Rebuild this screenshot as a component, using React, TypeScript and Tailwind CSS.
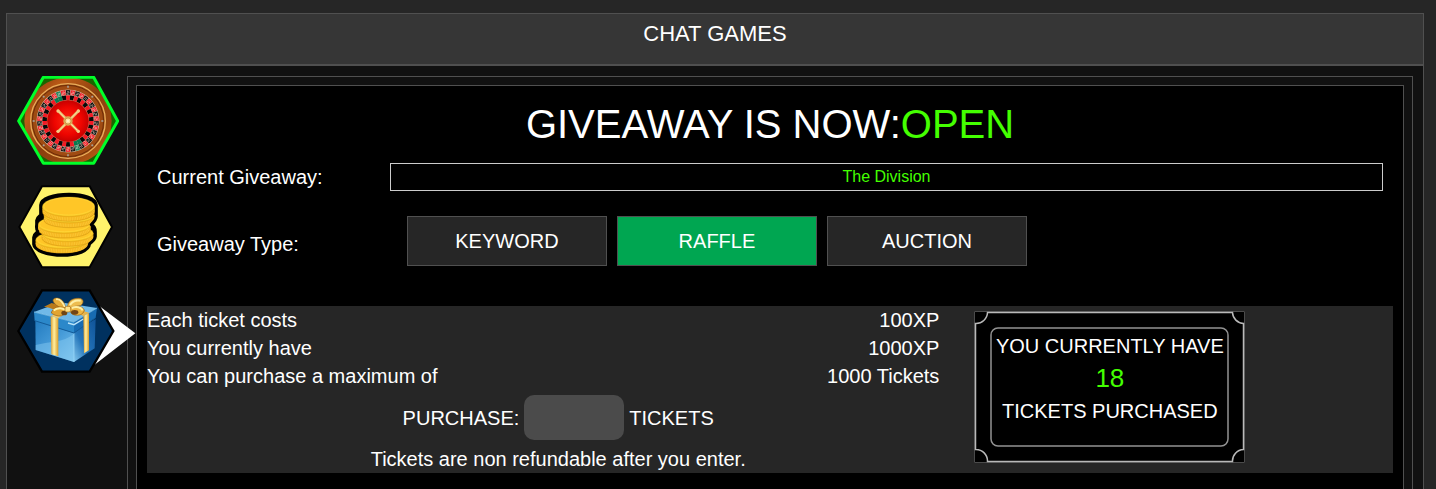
import { useState } from 'react'
import type { ReactNode } from 'react'

type GiveawayType = 'keyword' | 'raffle' | 'auction'

const TYPES: { id: GiveawayType; label: string }[] = [
  { id: 'keyword', label: 'KEYWORD' },
  { id: 'raffle',  label: 'RAFFLE' },
  { id: 'auction', label: 'AUCTION' },
]

const COSTS = [
  { label: 'Each ticket costs',             value: '100XP' },
  { label: 'You currently have',            value: '1000XP' },
  { label: 'You can purchase a maximum of', value: '1000 Tickets' },
]

// ─── Icons ────────────────────────────────────────────────────────────────────

const POCKETS = 38

function wedge(i: number, inner: number, outer: number) {
  const step = (Math.PI * 2) / POCKETS
  const a = (i - 0.5) * step - Math.PI / 2
  const b = a + step
  const p = (r: number, t: number) => `${204 + r * Math.cos(t)} ${168 + r * Math.sin(t)}`
  return `M${p(inner, a)}L${p(outer, a)}A${outer} ${outer} 0 0 1 ${p(outer, b)}L${p(inner, b)}A${inner} ${inner} 0 0 0 ${p(inner, a)}Z`
}

const isGreen = (i: number) => i === 17 || i === 36

function pocketColor(i: number) {
  if (isGreen(i)) return '#087a50'
  return i % 2 ? '#f21a24' : '#080808'
}

function RouletteIcon() {
  return (
    <svg width="102" height="90" viewBox="51 33 306 270" aria-hidden="true">
      <defs>
        <clipPath id="wheel-hex">
          <path d="M57 168 131 38H281L351 168 281 295H131Z" />
        </clipPath>
        <linearGradient id="wood" x1="0" y1="0" x2="1" y2="1">
          <stop offset="0" stopColor="#7a350a" />
          <stop offset=".25" stopColor="#bd5b16" />
          <stop offset=".5" stopColor="#8a3f0e" />
          <stop offset=".75" stopColor="#9a480f" />
          <stop offset="1" stopColor="#d36c1c" />
        </linearGradient>
        <radialGradient id="felt">
          <stop offset="0" stopColor="#ff2a12" />
          <stop offset=".65" stopColor="#ee0500" />
          <stop offset="1" stopColor="#c40000" />
        </radialGradient>
      </defs>
      <path d="M57 168 131 38H281L351 168 281 295H131Z" fill="#196500" />
      <g clipPath="url(#wheel-hex)">
        <circle cx="204" cy="168" r="131" fill="url(#wood)" />
        <circle cx="204" cy="168" r="112" fill="#a04b12" stroke="#e8ae5c" strokeWidth="4" />
        <circle cx="204" cy="168" r="107" fill="none" stroke="#6b2d08" strokeWidth="3" />
        <circle cx="204" cy="168" r="94" fill="#e2d0b4" />
      </g>
      {Array.from({ length: 8 }, (_, i) => (
        <path key={i} d="M204 62v6" stroke="#a7a097" strokeWidth="5" transform={`rotate(${i * 45} 204 168)`} />
      ))}
      {Array.from({ length: POCKETS }, (_, i) => (
        <g key={i}>
          <path d={wedge(i, 77, 93)} fill={pocketColor(i)} stroke="#d9c4ad" strokeWidth="1" />
          <path d={wedge(i, 63, 77)} fill={pocketColor(isGreen(i) ? i : i + 1)} />
          <path
            d="M201 80h6v4h-6v5h6"
            fill="none"
            stroke="#eee2d5"
            strokeOpacity=".75"
            strokeWidth="2"
            transform={`rotate(${(i * 360) / POCKETS} 204 168)`}
          />
        </g>
      ))}
      <circle cx="204" cy="168" r="63" fill="url(#felt)" stroke="#d0603a" strokeWidth="1" />
      <path d="M175 138 235 199M235 138 175 199" stroke="#e5b66a" strokeWidth="8" strokeLinecap="round" />
      <path d="M177 140 233 197M233 140 177 197" stroke="#ffe4a5" strokeWidth="3" />
      <g fill="#f3ca83">
        <circle cx="174" cy="138" r="5" />
        <circle cx="235" cy="138" r="5" />
        <circle cx="174" cy="199" r="5" />
        <circle cx="235" cy="199" r="5" />
      </g>
      <circle cx="204" cy="168" r="14" fill="#dba954" />
      <circle cx="204" cy="168" r="9" fill="#ffdf9c" stroke="#b68435" strokeWidth="2" />
      <circle cx="204" cy="168" r="3" fill="#fff5cf" />
      <path d="M56 168 130 37H281L353 168 281 295H130Z" fill="none" stroke="#00ff2a" strokeWidth="9" strokeLinejoin="round" />
    </svg>
  )
}

// bottom coin first, each one overlaps the one below it
const COINS = [
  { x: 187, y: 195, rx: 80, ry: 25 },
  { x: 203, y: 175, rx: 77, ry: 24 },
  { x: 193, y: 149, rx: 79, ry: 25 },
  { x: 208, y: 121, rx: 76, ry: 22 },
  { x: 206, y: 95,  rx: 79, ry: 29 },
]

const STACK =
  'M122 90C123 70 160 58 207 58C253 58 287 70 289 90V124C289 134 281 142 274 149C285 154 286 161 286 170V185C285 194 276 201 269 206C267 228 231 241 187 241C139 241 103 226 101 208V187C102 179 107 174 113 169C108 165 109 158 110 148V136C111 127 119 123 122 120Z'

function CoinsIcon() {
  return (
    <svg width="98" height="86" viewBox="51 27 294 258" aria-hidden="true">
      <defs>
        <clipPath id="coin-stack">
          <path d={STACK} />
        </clipPath>
      </defs>
      <path d="M58 156 126 34H269L336 156 269 277H126Z" fill="#fff36b" stroke="#000" strokeWidth="6" />
      <path d={STACK} fill="#000" />
      <g clipPath="url(#coin-stack)">
        {COINS.map(c => (
          <g key={c.y}>
            <path
              d={`M${c.x - c.rx} ${c.y}v15a${c.rx} ${c.ry} 0 0 0 ${c.rx * 2} 0v-15Z`}
              fill="#f5b41c"
              stroke="#b98a12"
              strokeWidth="1"
            />
            <path
              d={`M${c.x - c.rx + 4} ${c.y + 8}a${c.rx - 4} ${c.ry} 0 0 0 ${(c.rx - 4) * 2} 0`}
              fill="none"
              stroke="#ffd548"
              strokeWidth="10"
              strokeDasharray="3 2"
              opacity=".5"
            />
            <ellipse cx={c.x} cy={c.y} rx={c.rx} ry={c.ry} fill="#ffcd28" stroke="#c9a01c" strokeWidth="1" />
            <ellipse cx={c.x} cy={c.y - 1} rx={c.rx - 5} ry={c.ry - 3} fill="#ffc627" stroke="#ffd83c" strokeWidth="2" />
          </g>
        ))}
      </g>
      <path d={STACK} fill="none" stroke="#000" strokeWidth="9" strokeLinejoin="round" />
    </svg>
  )
}

function GiftIcon() {
  return (
    <svg width="98" height="86" viewBox="51 24 294 258" className="overflow-visible" aria-hidden="true">
      <defs>
        <linearGradient id="box-left" x1="0" y1="0" x2="1" y2="1">
          <stop offset="0" stopColor="#227bc0" />
          <stop offset=".5" stopColor="#469bd8" />
          <stop offset="1" stopColor="#7bc3ed" />
        </linearGradient>
        <linearGradient id="box-right" x1="0" y1="1" x2="1" y2="0">
          <stop offset="0" stopColor="#82c6ed" />
          <stop offset=".4" stopColor="#2475ba" />
          <stop offset="1" stopColor="#105398" />
        </linearGradient>
        <linearGradient id="ribbon" x1="0" x2="1">
          <stop offset="0" stopColor="#dc9d2d" />
          <stop offset=".45" stopColor="#fff0a2" />
          <stop offset="1" stopColor="#d99c26" />
        </linearGradient>
      </defs>
      <path d="M298 78 406 160 282 256 335 154Z" fill="#fff" />
      <path d="M55 153 126 31H269L340 153 269 275H126Z" fill="#00315f" stroke="#000" strokeWidth="7" />

      {/* box */}
      <path d="M106 121 222 155V246L107 210Z" fill="url(#box-left)" />
      <path d="M222 155 287 117 284 205 222 246Z" fill="url(#box-right)" />
      <path d="M107 195C145 184 190 189 222 161V246L107 210Z" fill="#8bcff4" opacity=".45" />
      <path d="M222 155V246" stroke="#9edafa" strokeWidth="2" />

      {/* lid */}
      <path d="M102 96 181 67 291 84 222 126Z" fill="#70b9e8" />
      <path d="M102 96 222 126V160L104 122Z" fill="#2b88ca" />
      <path d="M222 126 291 84 287 113 222 160Z" fill="#176bb2" />
      <path d="M102 96 222 126 291 84" fill="none" stroke="#91d1f5" strokeWidth="2" />
      <path d="M204 129 222 134 250 117" fill="none" stroke="#b9e4fa" strokeWidth="4" />
      <path d="M104 122 222 159 287 113" fill="none" stroke="#135b98" strokeWidth="3" />

      {/* ribbons */}
      <path d="M152 109 175 114V229L154 223Z" fill="url(#ribbon)" />
      <path d="M250 108 267 99V211L252 220Z" fill="url(#ribbon)" />
      <path d="M153 108 190 90 204 94 175 114Z" fill="#f4c966" />
      <path d="M229 99 250 108 267 98 242 91Z" fill="#e7b349" />

      {/* bow */}
      <path d="M132 80 155 69 190 78 179 88 159 88 148 83Z" fill="#b97919" />
      <path d="M197 84C193 60 176 51 164 55C153 60 160 75 193 88Z" fill="#e6ad3b" stroke="#996016" strokeWidth="2" />
      <path d="M168 58C181 55 191 71 194 82" fill="none" stroke="#ffeca3" strokeWidth="5" />
      <path d="M202 84C203 65 215 54 237 55C252 56 252 69 243 76C229 80 218 80 208 90Z" fill="#edbd50" stroke="#a46a18" strokeWidth="2" />
      <path d="M210 75C219 61 231 60 242 62" fill="none" stroke="#fff0a8" strokeWidth="6" />
      <path d="M197 84C181 77 157 82 154 99C163 106 178 111 188 106C196 101 200 94 201 87Z" fill="#e2a431" stroke="#925c13" strokeWidth="2" />
      <path d="M161 91C174 82 188 84 195 90" fill="none" stroke="#fff0a4" strokeWidth="6" />
      <ellipse cx="193" cy="99" rx="9" ry="7" fill="#704514" />
      <path d="M207 87C223 73 250 78 253 91C249 105 236 107 224 105C214 103 210 96 207 87Z" fill="#edb643" stroke="#925c13" strokeWidth="2" />
      <path d="M215 84C229 78 244 82 248 91" fill="none" stroke="#fff0a5" strokeWidth="6" />
      <ellipse cx="224" cy="97" rx="11" ry="7" fill="#724516" />
      <rect x="195" y="79" width="17" height="17" rx="5" fill="#ffe18a" stroke="#a26a16" strokeWidth="2" />
    </svg>
  )
}

function GameButton({ label, children }: { label: string; children: ReactNode }) {
  return (
    <button type="button" aria-label={label} title={label} className="cursor-pointer">
      {children}
    </button>
  )
}

// ─── Ticket ───────────────────────────────────────────────────────────────────

function Ticket({ count }: { count: number }) {
  return (
    <div className="relative h-[152px] w-[271px] bg-black px-4 py-4">
      <svg
        className="pointer-events-none absolute inset-0"
        width="271"
        height="152"
        viewBox="0 0 271 152"
        fill="none"
        aria-hidden="true"
      >
        <path d="M.5.5h270v151H.5Z" stroke="#4b4b4b" />
        <path
          d="M13.5 1.5H258.500A11.5 11.5 0 0 0 269.5 12.5V138.5A11.5 11.5 0 0 0 258.5 150.5H13.5A11.5 11.5 0 0 0 1.5 138.5V12.5A11.5 11.5 0 0 0 13.5 1.5Z"
          stroke="#b9b9b9"
          strokeWidth="1.5"
        />
        <rect x="17" y="17" width="237" height="118" rx="7" stroke="#929292" strokeWidth="1.5" />
      </svg>
      <div className="flex flex-col items-center whitespace-nowrap pt-[5px]">
        <p className="leading-7">YOU CURRENTLY HAVE</p>
        <p className="text-[26px] leading-[37px] text-[#44ff00]">{count}</p>
        <p className="leading-7">TICKETS PURCHASED</p>
      </div>
    </div>
  )
}

// ─── Main ─────────────────────────────────────────────────────────────────────

export default function App() {
  const [type, setType] = useState<GiveawayType>('raffle')
  const [amount, setAmount] = useState('')

  return (
    <div className="flex min-h-screen flex-col bg-[#262626] pt-[13px] pr-3 pl-1.5 font-['Liberation_Sans',Arial,sans-serif] text-xl leading-7 text-white">
      <div className="flex flex-1 flex-col border-x border-t border-[#505050] bg-[#111]">
        <header className="h-13 border-b-2 border-[#505050] bg-[#363636] pt-1 text-center">
          <h1 className="text-[22px] leading-8">CHAT GAMES</h1>
        </header>

        <div className="flex flex-1 pt-2.5 pr-2.5">
          <nav className="relative z-10 flex w-30 shrink-0 flex-col items-start gap-[18px] pl-2.5" aria-label="Games">
            <GameButton label="Roulette"><RouletteIcon /></GameButton>
            <GameButton label="Coins"><CoinsIcon /></GameButton>
            <GameButton label="Giveaway"><GiftIcon /></GameButton>
          </nav>

          <div className="flex min-w-0 flex-1 flex-col border-x border-t border-[#505050] px-2 pt-2">
            <main className="flex-1 border-x border-t border-[#505050] bg-black px-2.5">
              <h2 className="pt-3.5 text-center text-[40px] leading-12">
                GIVEAWAY IS NOW:<span className="text-[#44ff00]">OPEN</span>
              </h2>

              <div className="mt-[15px] flex px-2.5">
                <p className="w-[19%] shrink-0">Current Giveaway:</p>
                <p className="flex-1 border border-[#ccc] text-center text-base leading-[26px] text-[#44ff00]">
                  The Division
                </p>
              </div>

              <div className="mt-[25px] flex px-2.5" role="group" aria-labelledby="giveaway-type">
                <p id="giveaway-type" className="w-[19%] shrink-0 pt-3.5">Giveaway Type:</p>
                <div className="flex gap-2.5 pl-[17px]">
                  {TYPES.map(t => (
                    <button
                      key={t.id}
                      type="button"
                      aria-pressed={type === t.id}
                      onClick={() => setType(t.id)}
                      className={`h-[50px] w-50 cursor-pointer border border-[#505050] ${
                        type === t.id ? 'bg-[#00a651]' : 'bg-[#262626]'
                      }`}
                    >
                      {t.label}
                    </button>
                  ))}
                </div>
              </div>

              <section className="mt-10 flex bg-[#262626]">
                <div className="w-[66%]">
                  <table className="w-full">
                    <tbody>
                      {COSTS.map(row => (
                        <tr key={row.label}>
                          <th scope="row" className="p-0 text-left font-normal">{row.label}</th>
                          <td className="p-0 pr-[30px] text-right">{row.value}</td>
                        </tr>
                      ))}
                    </tbody>
                  </table>
                  <label className="my-[5px] flex items-center justify-center gap-[5px]">
                    PURCHASE:
                    <input
                      type="text"
                      inputMode="numeric"
                      value={amount}
                      onChange={e => setAmount(e.target.value)}
                      className="h-[45px] w-25 rounded-[10px] bg-[#4b4b4b] px-2 text-center outline-none"
                    />
                    TICKETS
                  </label>
                  <p className="text-center">Tickets are non refundable after you enter.</p>
                </div>
                <div className="pt-[5px] pl-[5px]">
                  <Ticket count={18} />
                </div>
              </section>
            </main>
          </div>
        </div>
      </div>
    </div>
  )
}
